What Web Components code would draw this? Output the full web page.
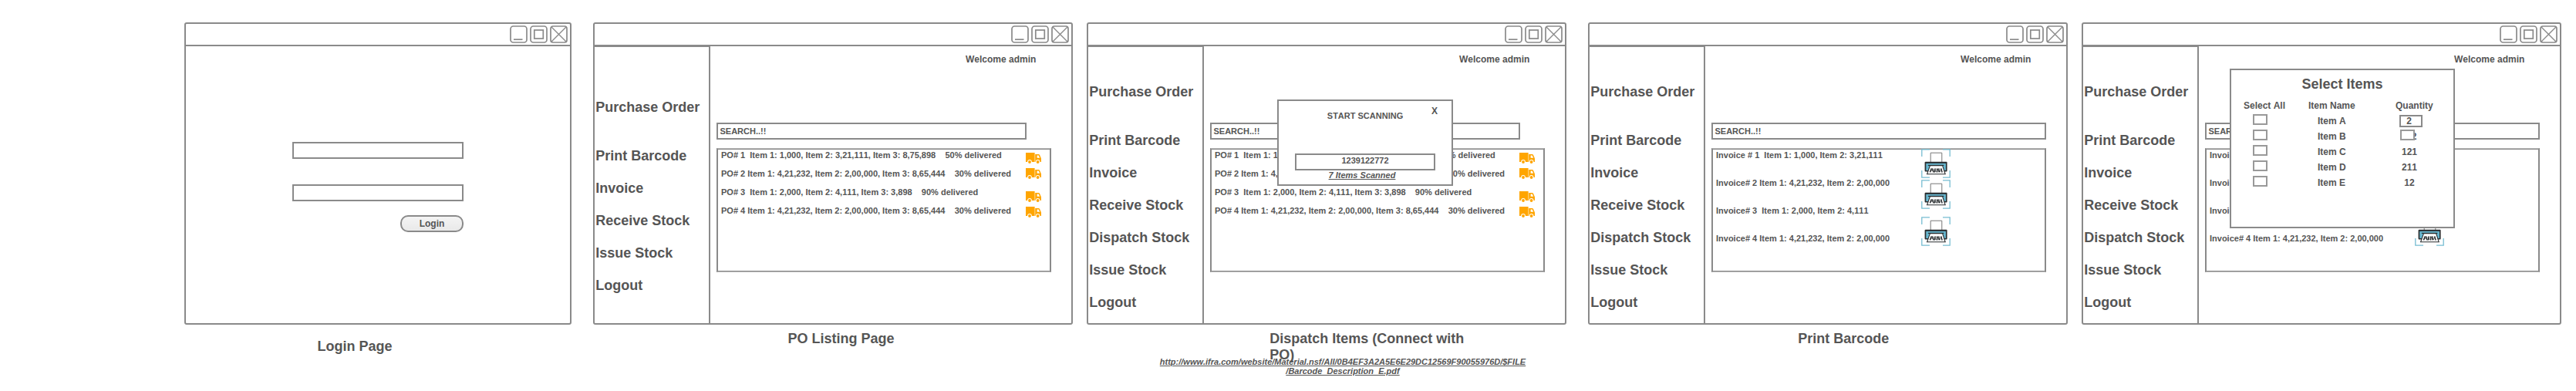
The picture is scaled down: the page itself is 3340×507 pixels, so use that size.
<!DOCTYPE html>
<html lang="en">
<head>
<meta charset="utf-8">
<title>Stock management wireframes</title>
<style>
  html, body { margin: 0; padding: 0; background: #fff; }
  body {
    --line: #8a8a8a;
    width: 3340px; height: 507px; overflow: hidden;
    font: bold 11px/12px "Liberation Sans", Arial, sans-serif;
    font-kerning: none;
    color: #555;
  }
</style>
</head>
<body>
<wf-board></wf-board>

<script>
const define = (name, html, setup) => {
  const tpl = document.createElement('template');
  tpl.innerHTML = html;
  customElements.define(name, class extends HTMLElement {
    constructor() {
      super();
      this.attachShadow({ mode: 'open' }).appendChild(tpl.content.cloneNode(true));
    }
    connectedCallback() { if (setup) setup(this, this.shadowRoot); }
  });
};

/* Minimise, maximise and close buttons */
define('wf-controls', `
<style>
  :host { display: block; width: 75px; height: 23px; }
  svg { display: block; fill: none; stroke: var(--line); stroke-width: 1.7; }
</style>
<svg width="75" height="23" viewBox="0 0 75 23">
  <rect x="1" y="1" width="21" height="21" rx="3.5"/>
  <path d="M5 18.2H16.5"/>
  <rect x="27" y="1" width="21" height="21" rx="3.5"/>
  <rect x="31.8" y="6" width="11.5" height="11"/>
  <rect x="53" y="1" width="21" height="21" rx="3"/>
  <path d="M54 2L73 21M73 2L54 21" stroke-width="1.4"/>
</svg>`);

/* Window frame */
define('wf-window', `
<style>
  :host { display: block; position: relative; box-sizing: border-box; height: 392px;
          border: 2px solid var(--line); border-radius: 3px; background: #fff; }
  header { box-sizing: border-box; height: 29px; padding: 2px 3px 0 0;
           border-bottom: 2px solid var(--line); display: flex; justify-content: flex-end; }
  .body { display: flex; height: 359px; }
</style>
<header><wf-controls></wf-controls></header>
<div class="body"><slot></slot></div>
<slot name="overlay"></slot>`);

define('wf-field', `
<style>
  :host { display: block; box-sizing: border-box; height: 22px; border: 2px solid var(--line);
          background: #fff; padding: 3px 0 0 2.5px; }
</style><slot></slot>`);

define('wf-button', `
<style>
  :host { display: block; box-sizing: border-box; width: 82px; height: 22px; border: 2px solid var(--line);
          border-radius: 10px; background: linear-gradient(#f4f4f4, #e9e9e9);
          font-size: 12px; line-height: 18px; text-align: center; }
</style><slot></slot>`);

define('wf-login', `
<style>
  :host { display: flex; flex-direction: column; margin: 124px 0 0 138px; width: 222px; }
  wf-field + wf-field { margin-top: 33px; }
  wf-button { margin-top: 18px; align-self: flex-end; }
</style>
<wf-field></wf-field><wf-field></wf-field><wf-button>Login</wf-button>`);

define('wf-sidebar', `
<style>
  :host { display: block; box-sizing: border-box; width: 150px; height: 359px; flex: none;
          border-top: 1px solid var(--line); border-right: 2px solid var(--line);
          font-size: 18px; line-height: 21px; }
  nav { display: flex; flex-direction: column; gap: 21px; padding: 48px 0 0 1.3px; }
  :host([short]) nav { padding-top: 68px; }
  span { white-space: nowrap; }
  span:first-child { margin-bottom: 21px; }
</style><nav></nav>`, (el, root) => {
  const items = ['Purchase Order', 'Print Barcode', 'Invoice', 'Receive Stock', 'Dispatch Stock', 'Issue Stock', 'Logout'];
  root.querySelector('nav').innerHTML = items
    .filter(t => !(el.hasAttribute('short') && t === 'Dispatch Stock'))
    .map(t => `<span>${t}</span>`).join('');
});

define('wf-truck', `
<style>:host { display: block; width: 20px; height: 14px; } svg { display: block; }</style>
<svg width="20" height="14" viewBox="0 0 20 14">
  <path fill="#ffa500" d="M0 0H11.6V12H0ZM12.2 2H16.6Q17.6 2 18.2 3.2L19.6 6.4Q20 7 20 8V12H12.2Z"/>
  <path fill="#fff" d="M14.6 3.6H16.6L18.2 6.8H14.6Z"/>
  <circle cx="5" cy="12" r="2.9" fill="#fff"/><circle cx="15.6" cy="12" r="2.9" fill="#fff"/>
  <circle cx="5" cy="12" r="1.9" fill="#ffa500"/><circle cx="15.6" cy="12" r="1.9" fill="#ffa500"/>
</svg>`);

define('wf-printer', `
<style>:host { display: block; width: 38px; height: 38px; } svg { display: block; }</style>
<svg width="38" height="38" viewBox="0 0 38 38" fill="none">
  <path stroke="#77bdd2" stroke-width="1.3" d="M.8 10V.8H11M28 .8H37.2V10M.8 28V37.2H11M28 37.2H37.2V28"/>
  <path stroke="#777" d="M12.2 17.5V5.2H26.8V17.5" fill="#fff"/>
  <path fill="#2b2f31" d="M5.6 16.8H32.6Q33.6 16.8 33.6 17.8V28.4Q33.6 29.4 32.6 29.4H5.6Q4.6 29.4 4.6 28.4V17.8Q4.6 16.8 5.6 16.8Z"/>
  <path fill="#68b9d2" d="M6.3 18.9H31.9V28H6.3Z"/>
  <path stroke="#2b2f31" stroke-width="1.3" d="M8.8 21.4H29.4"/>
  <path fill="#fff" stroke="#2b2f31" stroke-width="1.1" d="M11.5 21.6H27.6L31.2 32.8H7.6Z"/>
  <path stroke="#2b2f31" stroke-width="1.5" d="M13.4 25.4L11.4 30.4M14.6 25.4L16 30.4M18.2 25.4L17.4 30.4M20.6 25.4V30.4M22.8 25.4L23.4 30.4M25.6 25.4L27.2 30.4"/>
  <path stroke="#2b2f31" stroke-width=".8" d="M12 28H16.5M17 26.4L19.4 30.2M21 25.6L23 29.8M24.4 29.8L26 25.6"/>
</svg>`);

/* Result list: text rows beside a column of action icons */
define('wf-list', `
<style>
  :host { display: block; box-sizing: border-box; width: 434px; height: 161px; margin-top: 11px;
          border: 2px solid var(--line); border-top: 1px solid #b4b4b4; border-bottom: 1px solid #b4b4b4; background: #fff; }
  .in { box-sizing: border-box; height: 159px; display: flex; padding: 1px 0 0 4px;
        border-top: 1px solid var(--line); border-bottom: 1px solid var(--line); }
  .rows { flex: none; width: 395px; }
  .rows div { height: 24px; white-space: pre; }
  .icons { flex: none; padding-top: 3px; display: flex; flex-direction: column; gap: 6px; }
  .icons > :nth-child(3) { margin-top: 10px; }
  :host([kind=invoice]) .rows { width: 266px; }
  :host([kind=invoice]) .rows div { height: 36px; }
  :host([kind=invoice]) .icons { padding: 0; margin-top: -2px; gap: 2px; }
  :host([kind=invoice]) .icons > :nth-child(3) { margin-top: 8px; }
</style>
<div class="in"><div class="rows"></div><div class="icons"></div></div>`, (el, root) => {
  const invoice = el.getAttribute('kind') === 'invoice';
  const rows = invoice ? [
    'Invoice # 1  Item 1: 1,000, Item 2: 3,21,111',
    'Invoice# 2 Item 1: 4,21,232, Item 2: 2,00,000',
    'Invoice# 3  Item 1: 2,000, Item 2: 4,111',
    'Invoice# 4 Item 1: 4,21,232, Item 2: 2,00,000'
  ] : [
    'PO# 1  Item 1: 1,000, Item 2: 3,21,111, Item 3: 8,75,898    50% delivered',
    'PO# 2 Item 1: 4,21,232, Item 2: 2,00,000, Item 3: 8,65,444    30% delivered',
    'PO# 3  Item 1: 2,000, Item 2: 4,111, Item 3: 3,898    90% delivered',
    'PO# 4 Item 1: 4,21,232, Item 2: 2,00,000, Item 3: 8,65,444    30% delivered'
  ];
  root.querySelector('.rows').innerHTML = rows.map(t => `<div>${t}</div>`).join('');
  root.querySelector('.icons').innerHTML = invoice ? '<wf-printer></wf-printer>'.repeat(3) : '<wf-truck></wf-truck>'.repeat(4);
});

define('wf-main', `
<style>
  :host { display: block; padding: 10px 0 0 8px; }
  .hi { font-size: 12px; line-height: 14px; margin: 0 0 75px 323px; white-space: nowrap; }
  wf-field { width: 402px; }
  :host([kind=invoice]) wf-field { width: 434px; }
</style>
<div class="hi">Welcome admin</div>
<wf-field>SEARCH..!!</wf-field>
<wf-list></wf-list>`, (el, root) => {
  if (el.hasAttribute('kind')) {
    const old = root.querySelector('wf-list');
    const list = document.createElement('wf-list');
    list.setAttribute('kind', el.getAttribute('kind'));
    old.replaceWith(list);
  }
});

define('wf-scan-dialog', `
<style>
  :host { display: block; position: absolute; left: 245px; top: 98px; box-sizing: border-box;
          width: 228px; height: 112px; border: 2px solid var(--line); background: #fff; }
  .top { display: grid; grid-template-columns: 1fr; height: 68px; }
  .top > * { grid-area: 1 / 1; }
  h2 { margin: 13px 0 0; font-size: 11px; line-height: 12px; text-align: center; }
  .x { justify-self: end; margin: 6px 18px 0 0; font-size: 12px; line-height: 14px; }
  wf-field { width: 182px; margin-left: 21px; padding: 1px 0 0; text-align: center; }
  .n { margin: 0 8px 0 0; text-align: center; font-style: italic; text-decoration: underline; }
</style>
<div class="top"><h2>START SCANNING</h2><span class="x">X</span></div>
<wf-field>1239122772</wf-field>
<div class="n">7 Items Scanned</div>`);

define('wf-check', `
<style>
  :host { display: block; box-sizing: border-box; width: 19px; height: 13.5px; border: 2px solid #999; background: #fff; }
</style>`);

define('wf-select-dialog', `
<style>
  :host { display: block; position: absolute; left: 190px; top: 58px; box-sizing: border-box;
          width: 292px; height: 207px; border: 2px solid var(--line); background: #fff;
          font-size: 12px; line-height: 14px; }
  h2 { margin: 8px 0 10px; font-size: 18px; line-height: 21px; text-align: center; }
  .g { display: grid; grid-template-columns: 84px 112px 1fr; padding-left: 16px; height: 20px; white-space: nowrap; box-sizing: border-box; }
  .head { height: 17px; }
  .g > :nth-child(3) { padding-left: 1px; }
  .row wf-check { margin: 1px 0 0 12px; }
  .row .name { padding-left: 12px; padding-top: 3px; }
  .row .qty { width: 36px; padding-top: 3px; text-align: center; position: relative; }
  .row .box { box-sizing: border-box; width: 30px; height: 16px; margin: 2px 0 0 6px; padding: 0 5px 0 0; line-height: 12px;
              border: 2px solid var(--line); }
  .row .over { padding-left: 21.7px; width: 8px; text-align: left; }
  .row .over wf-check { position: absolute; left: 7px; top: 1px; margin: 0; }
</style>
<h2>Select Items</h2>
<div class="g head"><span>Select All</span><span>Item Name</span><span>Quantity</span></div>
<div class="g row"><wf-check></wf-check><span class="name">Item A</span><span class="qty box">2</span></div>
<div class="g row"><wf-check></wf-check><span class="name">Item B</span><span class="qty over">2<wf-check></wf-check></span></div>
<div class="g row"><wf-check></wf-check><span class="name">Item C</span><span class="qty">121</span></div>
<div class="g row"><wf-check></wf-check><span class="name">Item D</span><span class="qty">211</span></div>
<div class="g row"><wf-check></wf-check><span class="name">Item E</span><span class="qty">12</span></div>`);

define('wf-caption', `
<style>:host { display: block; font-size: 18px; line-height: 21px; white-space: nowrap; }</style><slot></slot>`);

define('wf-board', `
<style>
  :host { display: flex; align-items: flex-start; padding: 29px 0 0 239px; box-sizing: border-box; width: 3340px; height: 507px; }
  section { flex: none; width: 622px; margin-left: 28px; }
  section.login { width: 502px; margin-left: 0; }
  section.near { margin-left: 18px; }
  wf-caption { margin-top: 8px; }
  .login wf-caption { margin-top: 18px; }
  .url { width: 476px; margin: -8px 0 0 94px; text-align: center; font-style: italic; text-decoration: underline; white-space: nowrap; }
</style>
<section class="login">
  <wf-window><wf-login></wf-login></wf-window>
  <wf-caption style="margin-left: 172.5px">Login Page</wf-caption>
</section>
<section>
  <wf-window><wf-sidebar short></wf-sidebar><wf-main></wf-main></wf-window>
  <wf-caption style="margin-left: 252.5px">PO Listing Page</wf-caption>
</section>
<section class="near">
  <wf-window><wf-sidebar></wf-sidebar><wf-main></wf-main><wf-scan-dialog slot="overlay"></wf-scan-dialog></wf-window>
  <wf-caption style="margin-left: 237.3px">Dispatch Items (Connect with<br>PO)</wf-caption>
  <div class="url">http://www.ifra.com/website/Material.nsf/All/0B4EF3A2A5E6E29DC12569F90055976D/$FILE<br>/Barcode_Description_E.pdf</div>
</section>
<section>
  <wf-window><wf-sidebar></wf-sidebar><wf-main kind="invoice"></wf-main></wf-window>
  <wf-caption style="margin-left: 272.3px">Print Barcode</wf-caption>
</section>
<section class="near">
  <wf-window><wf-sidebar></wf-sidebar><wf-main kind="invoice"></wf-main><wf-select-dialog slot="overlay"></wf-select-dialog></wf-window>
</section>`);
</script>
</body>
</html>
